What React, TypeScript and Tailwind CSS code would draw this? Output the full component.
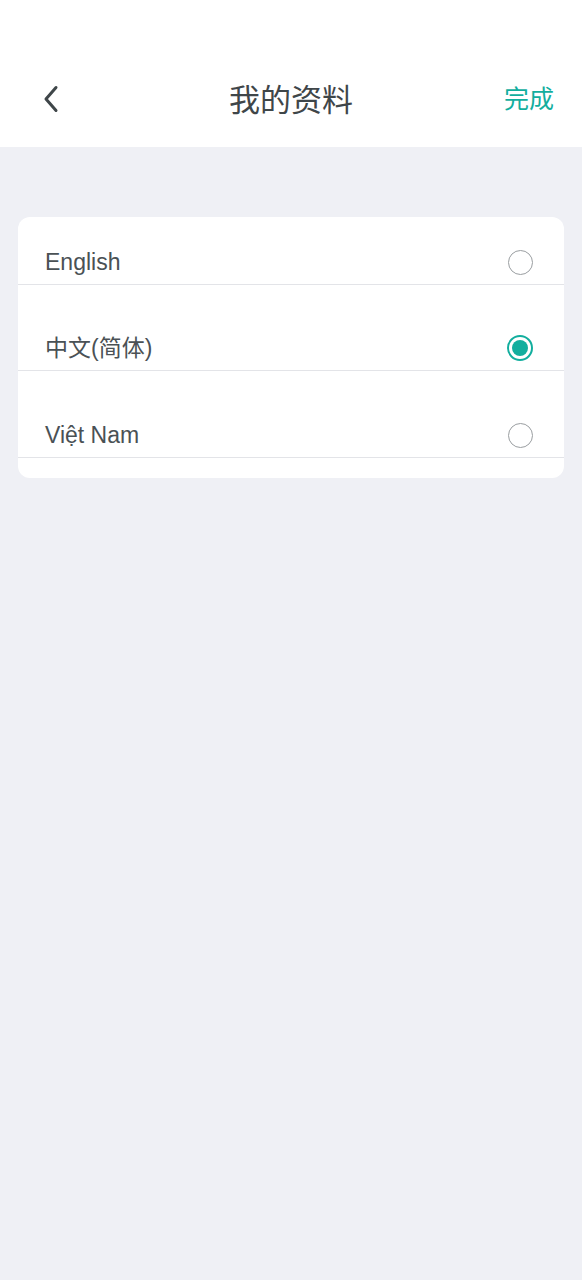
import { useState } from "react";

const languages = [
  { id: "en", label: "English", h: "h-[68px]" },
  { id: "zh", label: "中文(简体)", h: "h-[86px]" },
  { id: "vi", label: "Việt Nam", h: "h-[87px]" },
];

function Radio({ checked }: { checked: boolean }) {
  if (checked) {
    return (
      <span className="flex h-[26px] w-[26px] items-center justify-center rounded-full border-2 border-[#12ae9e]">
        <span className="h-[16px] w-[16px] rounded-full bg-[#12ae9e]" />
      </span>
    );
  }
  return <span className="h-[25px] w-[25px] rounded-full border-[1.5px] border-[#9a9ea1]" />;
}

export default function App() {
  const [selected, setSelected] = useState("zh");

  return (
    <div
      className="min-h-[1280px] w-full bg-[#eff0f5]"
      style={{ fontFamily: '"Liberation Sans", Arial, "Noto Sans CJK SC", sans-serif' }}
    >
      {/* HEADER */}
      <div className="h-[147px] bg-white pt-[60px]">
        <div className="relative flex h-[78px] items-center justify-center">
          <button className="absolute left-[36px] top-[21px] flex h-[36px] w-[30px] items-center justify-center">
            <svg width="16" height="28" viewBox="0 0 16 28" fill="none">
              <path
                d="M13 2.5 L3 14 L13 25.5"
                stroke="#3f4649"
                strokeWidth="3"
                strokeLinecap="round"
                strokeLinejoin="round"
              />
            </svg>
          </button>
          <h1 className="pt-[4px] text-[31px] text-[#3f4649]">我的资料</h1>
          <button className="absolute right-[28px] top-[21px] text-[25px] text-[#12ae9e]">
            完成
          </button>
        </div>
      </div>

      {/* LANGUAGE LIST */}
      <div className="px-[18px] pt-[70px]">
        <div className="rounded-[12px] bg-white pb-[20px]">
          {languages.map((lang) => (
            <div
              key={lang.id}
              onClick={() => setSelected(lang.id)}
              className={`flex ${lang.h} items-end justify-between border-b border-[#e3e4e8] pl-[27px] pr-[31px] pb-[6px]`}
            >
              <span className="text-[23px] leading-[32px] text-[#4a5155]">{lang.label}</span>
              <span className="flex h-[32px] items-center">
                <Radio checked={selected === lang.id} />
              </span>
            </div>
          ))}
        </div>
      </div>
    </div>
  );
}
